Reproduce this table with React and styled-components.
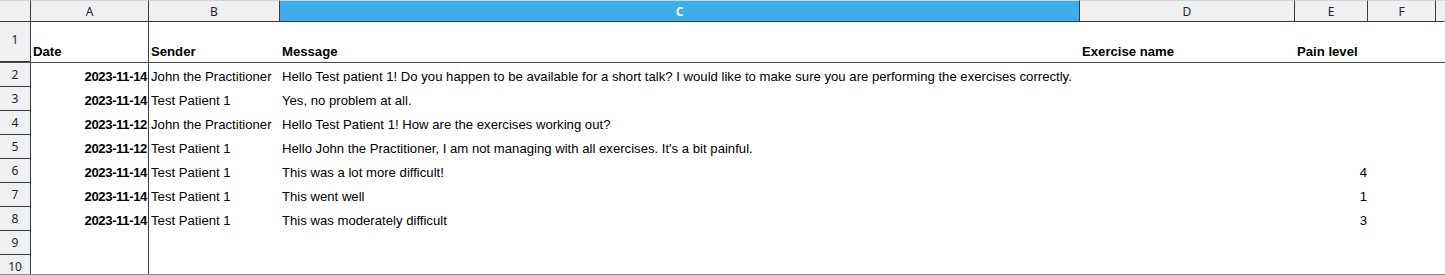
import React from "react";
import styled, { createGlobalStyle } from "styled-components";

const Global = createGlobalStyle`
  html, body { margin: 0; padding: 0; background: #ffffff; }
  body { font-family: "Liberation Sans", Arial, sans-serif; }
  * { box-sizing: border-box; }
`;

const COLS = "31px 118px 131px 800px 215px 73px 68px 1fr";

const Sheet = styled.div`
  width: 1445px;
  height: 275px;
  overflow: hidden;
  border-bottom: 1px solid #8c8c8c;
  display: flex;
  flex-direction: column;
`;

const Row = styled.div`
  display: grid;
  grid-template-columns: ${COLS};
  height: ${(p) => p.$h}px;
  flex: 0 0 auto;
  border-bottom: ${(p) => (p.$line ? "1px solid #4a4a4a" : "none")};
`;

const ColHead = styled.div`
  display: flex;
  align-items: center;
  justify-content: center;
  background: ${(p) => (p.$active ? "#3daee9" : "#eff0f1")};
  color: ${(p) => (p.$active ? "#ffffff" : "#232629")};
  font-family: "Noto Sans", "DejaVu Sans", sans-serif;
  font-size: 12px;
  font-weight: ${(p) => (p.$active ? 700 : 400)};
  border-right: 1px solid ${(p) => (p.$last ? "transparent" : "#3a3a3a")};
  border-bottom: 1px solid #3a3a3a;
  border-top: 1px solid #d5d7d9;
  padding-top: 1px;
`;

const RowHead = styled.div`
  display: flex;
  align-items: flex-end;
  justify-content: center;
  padding-bottom: ${(p) => (p.$tall ? 13 : 3)}px;
  background: #eff0f1;
  color: #232629;
  font-family: "Noto Sans", "DejaVu Sans", sans-serif;
  font-size: 12px;
  line-height: 16px;
  border-right: 1px solid #3a3a3a;
  border-bottom: 1px solid #3a3a3a;
`;

const Cell = styled.div`
  display: flex;
  align-items: flex-end;
  justify-content: ${(p) => (p.$right ? "flex-end" : "flex-start")};
  padding: 0 ${(p) => (p.$right ? "1px" : "0")} 3px 2px;
  font-size: 13.15px;
  line-height: 15px;
  color: #000000;
  font-weight: ${(p) => (p.$bold ? 700 : 400)};
  letter-spacing: ${(p) => (p.$date ? "-0.4px" : "normal")};
  white-space: nowrap;
  overflow: visible;
  border-right: ${(p) => (p.$freeze ? "1px solid #3f3f3f" : "none")};
`;

const cols = ["A", "B", "C", "D", "E", "F"];

const data = [
  ["2023-11-14", "John the Practitioner", "Hello Test patient 1! Do you happen to be available for a short talk? I would like to make sure you are performing the exercises correctly.", "", ""],
  ["2023-11-14", "Test Patient 1", "Yes, no problem at all.", "", ""],
  ["2023-11-12", "John the Practitioner", "Hello Test Patient 1! How are the exercises working out?", "", ""],
  ["2023-11-12", "Test Patient 1", "Hello John the Practitioner, I am not managing with all exercises. It's a bit painful.", "", ""],
  ["2023-11-14", "Test Patient 1", "This was a lot more difficult!", "", "4"],
  ["2023-11-14", "Test Patient 1", "This went well", "", "1"],
  ["2023-11-14", "Test Patient 1", "This was moderately difficult", "", "3"],
  ["", "", "", "", ""],
  ["", "", "", "", ""],
];

export default function App() {
  return (
    <>
      <Global />
      <Sheet>
        <Row $h={22}>
          <ColHead />
          {cols.map((c) => (
            <ColHead key={c} $active={c === "C"}>
              {c}
            </ColHead>
          ))}
          <ColHead $last />
        </Row>
        <Row $h={41} $line>
          <RowHead $tall>1</RowHead>
          <Cell $bold $freeze>Date</Cell>
          <Cell $bold>Sender</Cell>
          <Cell $bold>Message</Cell>
          <Cell $bold>Exercise name</Cell>
          <Cell $bold>Pain level</Cell>
          <Cell />
          <Cell />
        </Row>
        {data.map((r, i) => (
          <Row key={i} $h={24}>
            <RowHead>{i + 2}</RowHead>
            <Cell $bold $right $date $freeze>{r[0]}</Cell>
            <Cell>{r[1]}</Cell>
            <Cell>{r[2]}</Cell>
            <Cell>{r[3]}</Cell>
            <Cell $right>{r[4]}</Cell>
            <Cell />
            <Cell />
          </Row>
        ))}
      </Sheet>
    </>
  );
}
